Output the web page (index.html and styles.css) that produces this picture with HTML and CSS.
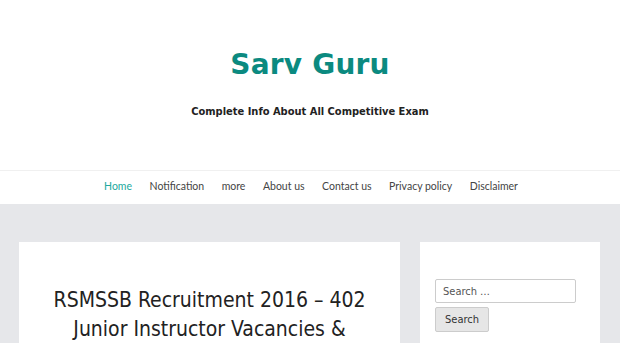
FILE: index.html
```html
<!DOCTYPE html>
<html lang="en">
<head>
<meta charset="utf-8">
<title>Sarv Guru</title>
<link rel="stylesheet" href="styles.css">
</head>
<body>
<header class="site-header">
  <h1 class="site-title">Sarv Guru</h1>
  <p class="site-desc">Complete Info About All Competitive Exam</p>
</header>
<nav class="main-nav">
  <ul class="menu">
    <li class="active">Home</li>
    <li>Notification</li>
    <li>more</li>
    <li>About us</li>
    <li>Contact us</li>
    <li>Privacy policy</li>
    <li>Disclaimer</li>
  </ul>
</nav>
<div class="content">
  <main class="post">
    <h2 class="post-title">RSMSSB Recruitment 2016 – 402 Junior Instructor Vacancies &amp; Syllabus</h2>
  </main>
  <aside class="sidebar">
    <form class="search-form">
      <input class="search-field" type="search" placeholder="Search …">
      <button class="search-submit" type="button">Search</button>
    </form>
  </aside>
</div>
</body>
</html>
```
FILE: styles.css
```css
* { box-sizing: border-box; }
html, body { margin: 0; padding: 0; }
body {
  background: #e6e7ea;
  font-family: "DejaVu Sans", sans-serif;
  color: #222;
  height: 343px;
  overflow: hidden;
}
.site-header {
  background: #fff;
  height: 170px;
  padding-top: 47px;
  text-align: center;
}
.site-title {
  margin: 0;
  font-family: "DejaVu Sans", sans-serif;
  font-weight: bold;
  font-size: 28px;
  line-height: 36px;
  color: #0b8a80;
  letter-spacing: 0.2px;
}
.site-desc {
  margin: 21px 0 0;
  font-family: "DejaVu Sans Condensed", "DejaVu Sans", sans-serif;
  font-size: 11px;
  font-weight: bold;
  line-height: 16px;
  color: #222;
}
.main-nav {
  background: #fff;
  border-top: 1px solid #f0f0f0;
  height: 34px;
}
.menu {
  list-style: none;
  margin: 0;
  padding: 0 0 0 2px;
  display: flex;
  justify-content: center;
  gap: 17.5px;
  font-family: Lato, sans-serif;
  font-size: 10.5px;
  line-height: 31px;
  color: #444;
}
.menu .active { color: #22a99e; }
.content {
  display: flex;
  gap: 20px;
  padding: 38px 20px 0 19px;
}
.post {
  background: #fff;
  width: 381px;
  flex: none;
  padding: 44px 18px 40px;
  height: 200px;
}
.post-title {
  margin: 0;
  font-family: "DejaVu Sans Condensed", "DejaVu Sans", sans-serif;
  font-weight: normal;
  font-size: 21px;
  line-height: 29px;
  text-align: center;
  color: #222;
}
.sidebar {
  background: #fff;
  width: 180px;
  flex: none;
  padding: 37px 15px;
  height: 200px;
}
.search-form {
  display: flex;
  flex-direction: column;
  align-items: flex-start;
  gap: 4px;
}
.search-field {
  width: 141px;
  height: 24px;
  border: 1px solid #ccc;
  border-radius: 2px;
  padding: 0 7px;
  font-family: "DejaVu Sans Condensed", "DejaVu Sans", sans-serif;
  font-size: 11px;
  color: #555;
  background: #fff;
}
.search-field::placeholder { color: #555; }
.search-submit {
  height: 25px;
  width: 54px;
  border: 1px solid #ccc;
  border-radius: 2px;
  background: #e6e6e6;
  font-family: "DejaVu Sans Condensed", "DejaVu Sans", sans-serif;
  font-size: 11px;
  color: #333;
  padding: 0;
}
```
